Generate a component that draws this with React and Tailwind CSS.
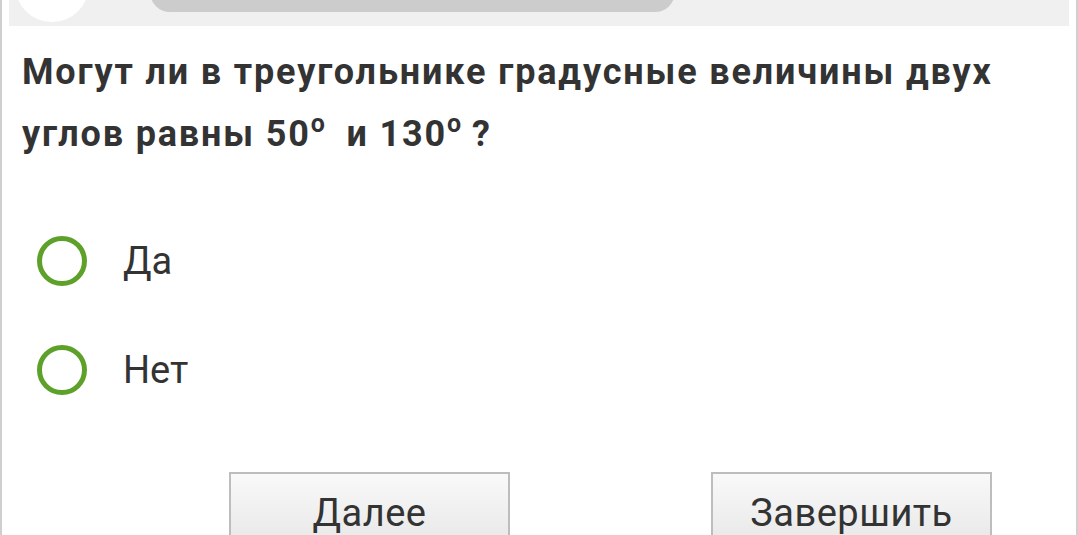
const options = ["Да", "Нет"];

const Radio = ({ label }) => {
  return (
    <label className="flex items-center h-[109px] cursor-pointer">
      <span className="w-[50px] h-[50px] rounded-full border-[5px] border-[#5ea12a] bg-white shrink-0" />
      <span className="ml-[36px] text-[38px] text-[#333333] leading-none">
        {label}
      </span>
    </label>
  );
};

const NavButton = ({ children }) => {
  return (
    <button
      type="button"
      className="w-[281px] h-[82px] border-2 border-[#bdbdbd] bg-gradient-to-b from-[#f9f9f9] to-[#e6e6e6] text-[38px] tracking-[0.5px] text-[#333333] leading-none"
    >
      {children}
    </button>
  );
};

export default function App() {
  return (
    <div
      className="w-[1078px] h-[535px] overflow-hidden bg-white border-x-2 border-[#cfcfcf]"
      style={{ fontFamily: "Roboto, 'Noto Sans', sans-serif" }}
    >
      <div className="px-[7px]">
        <div className="flex items-start h-[26px] bg-[#f0f0f0] overflow-hidden">
          <div className="w-[74px] h-[74px] rounded-full bg-white ml-[6px] -mt-[52px] shrink-0" />
          <div className="w-[525px] h-[40px] ml-[61px] -mt-[28px] rounded-[20px] bg-[#cccccc] shrink-0" />
        </div>
      </div>

      <h1 className="mt-[15px] pl-[20px] pr-[40px] text-[36px] tracking-[1.85px] font-bold leading-[62px] text-[#333333]">
        Могут ли в треугольнике градусные величины двух углов равны 50
        <span className="relative -top-[14px] text-[25px] tracking-normal">o</span>
        {"\u00a0 "}и 130
        <span className="relative -top-[14px] text-[25px] tracking-normal">o</span> ?
      </h1>

      <div className="mt-[37px] pl-[35px] flex flex-col">
        {options.map((o) => (
          <Radio key={o} label={o} />
        ))}
      </div>

      <div className="mt-[48px] pl-[227px] flex gap-[201px]">
        <NavButton>Далее</NavButton>
        <NavButton>Завершить</NavButton>
      </div>
    </div>
  );
}
